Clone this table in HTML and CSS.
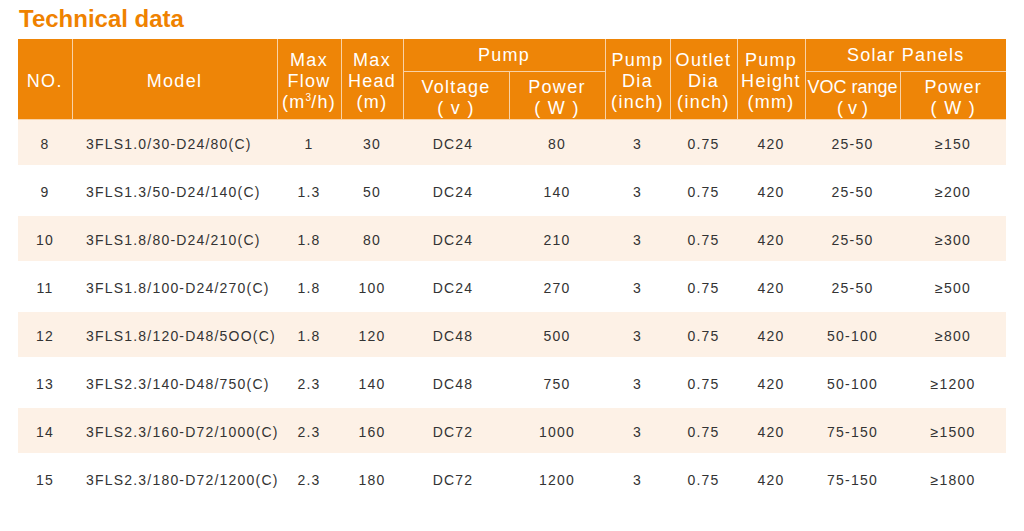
FILE: index.html
```html
<!DOCTYPE html>
<html lang="en">
<head>
<meta charset="utf-8">
<title>Technical data</title>
<link rel="stylesheet" href="styles.css">
</head>
<body>
<h1 class="title">Technical data</h1>
<table class="spec">
  <colgroup>
    <col class="c-no"><col class="c-model"><col class="c-flow"><col class="c-head">
    <col class="c-volt"><col class="c-pow"><col class="c-dia"><col class="c-out">
    <col class="c-hgt"><col class="c-voc"><col class="c-spow">
  </colgroup>
  <thead>
    <tr class="h1">
      <th rowspan="2" class="tall">NO.</th>
      <th rowspan="2" class="tall">Model</th>
      <th rowspan="2" class="tall">Max<br>Flow<br>(m<sup>3</sup>/h)</th>
      <th rowspan="2" class="tall">Max<br>Head<br>(m)</th>
      <th colspan="2" class="group">Pump</th>
      <th rowspan="2" class="tall">Pump<br>Dia<br>(inch)</th>
      <th rowspan="2" class="tall">Outlet<br>Dia<br>(inch)</th>
      <th rowspan="2" class="tall">Pump<br>Height<br>(mm)</th>
      <th colspan="2" class="group">Solar Panels</th>
    </tr>
    <tr class="h2">
      <th>Voltage<br>( v )</th>
      <th>Power<br>( W )</th>
      <th class="tight">VOC range<br>( v )</th>
      <th>Power<br>( W )</th>
    </tr>
  </thead>
  <tbody>
    <tr class="alt"><td>8</td><td class="model">3FLS1.0/30-D24/80(C)</td><td>1</td><td>30</td><td class="volt">DC24</td><td>80</td><td>3</td><td>0.75</td><td>420</td><td>25-50</td><td>≥150</td></tr>
    <tr><td>9</td><td class="model">3FLS1.3/50-D24/140(C)</td><td>1.3</td><td>50</td><td class="volt">DC24</td><td>140</td><td>3</td><td>0.75</td><td>420</td><td>25-50</td><td>≥200</td></tr>
    <tr class="alt"><td>10</td><td class="model">3FLS1.8/80-D24/210(C)</td><td>1.8</td><td>80</td><td class="volt">DC24</td><td>210</td><td>3</td><td>0.75</td><td>420</td><td>25-50</td><td>≥300</td></tr>
    <tr><td>11</td><td class="model">3FLS1.8/100-D24/270(C)</td><td>1.8</td><td>100</td><td class="volt">DC24</td><td>270</td><td>3</td><td>0.75</td><td>420</td><td>25-50</td><td>≥500</td></tr>
    <tr class="alt"><td>12</td><td class="model">3FLS1.8/120-D48/5OO(C)</td><td>1.8</td><td>120</td><td class="volt">DC48</td><td>500</td><td>3</td><td>0.75</td><td>420</td><td>50-100</td><td>≥800</td></tr>
    <tr><td>13</td><td class="model">3FLS2.3/140-D48/750(C)</td><td>2.3</td><td>140</td><td class="volt">DC48</td><td>750</td><td>3</td><td>0.75</td><td>420</td><td>50-100</td><td>≥1200</td></tr>
    <tr class="alt"><td>14</td><td class="model">3FLS2.3/160-D72/1000(C)</td><td>2.3</td><td>160</td><td class="volt">DC72</td><td>1000</td><td>3</td><td>0.75</td><td>420</td><td>75-150</td><td>≥1500</td></tr>
    <tr><td>15</td><td class="model">3FLS2.3/180-D72/1200(C)</td><td>2.3</td><td>180</td><td class="volt">DC72</td><td>1200</td><td>3</td><td>0.75</td><td>420</td><td>75-150</td><td>≥1800</td></tr>
  </tbody>
</table>
</body>
</html>
```

FILE: styles.css
```css
html, body {
  margin: 0;
  padding: 0;
  background: #ffffff;
}

body {
  padding: 5px 18px 0 18px;
  font-family: "Liberation Sans", Arial, sans-serif;
}

.title {
  margin: 0 0 6px 1px;
  font-size: 24px;
  line-height: 28px;
  font-weight: bold;
  color: #ef8200;
}

.spec {
  border-collapse: collapse;
  border-style: hidden;
  table-layout: fixed;
  width: 988px;
}

.c-no { width: 54px; }
.c-model { width: 205px; }
.c-flow { width: 64px; }
.c-head { width: 62px; }
.c-volt { width: 106px; }
.c-pow { width: 96px; }
.c-dia { width: 65px; }
.c-out { width: 67px; }
.c-hgt { width: 68px; }
.c-voc { width: 95px; }
.c-spow { width: 106px; }

.spec th {
  background: #ee8507;
  color: #ffffff;
  font-weight: normal;
  font-size: 18px;
  line-height: 21px;
  letter-spacing: 1.3px;
  border: 1px solid #f9d2a6;
  padding: 4px 0 0 0;
  text-align: center;
  vertical-align: middle;
  white-space: nowrap;
}

.spec th.group {
  padding-top: 1px;
}

.spec th sup {
  font-size: 10px;
  line-height: 0;
  vertical-align: 7px;
  letter-spacing: 0;
}

.spec th.tight {
  letter-spacing: 0;
}

.h1 th.group {
  height: 31px;
}

.h2 th {
  height: 43px;
}

.spec td {
  height: 43px;
  padding: 2px 0 0 0;
  border-bottom: 3px solid #ffffff;
  font-size: 14px;
  letter-spacing: 1.2px;
  color: #333333;
  text-align: center;
  vertical-align: middle;
  white-space: nowrap;
}

.spec td.model {
  text-align: left;
  padding-left: 14px;
}

.spec td.volt {
  padding-right: 6px;
}

.spec tr.alt td {
  background: #fdf1e6;
}
```
